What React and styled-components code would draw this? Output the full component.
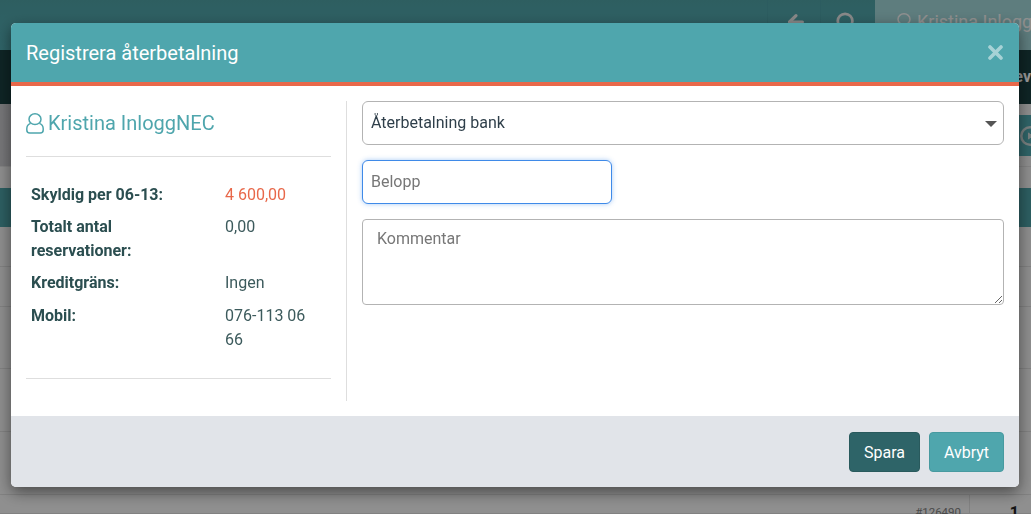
import styled, { createGlobalStyle } from 'styled-components';
import { ArrowLeft, Search } from 'lucide-react';

const Global = createGlobalStyle`
  html, body {
    margin: 0;
    height: 100%;
    overflow: hidden;
    font-family: Roboto, "Liberation Sans", sans-serif;
    font-size: 16px;
    color: #2b4e50;
  }
  * { box-sizing: border-box; }
`;

const Page = styled.div`
  height: 514px;
  overflow: hidden;
  background: #eeeeee;
`;

const TopBar = styled.div`
  height: 50px;
  display: flex;
  justify-content: flex-end;
  background: linear-gradient(#4d9da1, #4fa6ad);
`;

const TopCell = styled.div`
  width: ${props => props.width}px;
  display: flex;
  justify-content: center;
  padding-top: 11px;
  border-left: 1px solid #4a9aa0;
  color: #e4e4e4;
`;

const UserCell = styled.div`
  width: 156px;
  display: flex;
  align-items: flex-start;
  gap: 4px;
  padding: 11px 0 0 20px;
  background: #9dd0d2;
  color: #f0f0f0;
  font-size: 18px;
  line-height: 22px;
  white-space: nowrap;
  overflow: hidden;
`;

const NavBar = styled.div`
  height: 54px;
  display: flex;
  justify-content: flex-end;
  padding: 17px 0 0;
  background: #193e3f;
  color: #ffffff;
  font-weight: 700;
`;

const Toolbar = styled.div`
  height: 63px;
  padding-top: 11px;
  background: linear-gradient(90deg, #c6c6ca, #eeeeee);
  border-bottom: 1px solid #dddddd;
`;

const ToolTeal = styled.div`
  height: 41px;
  margin-left: auto;
  width: 12px;
  background: #4fa6ad;
  display: flex;
  align-items: center;
`;

const Spacer = styled.div`
  height: 21px;
`;

const TableHead = styled.div`
  height: 39px;
  background: #4b9ea3;
`;

const TableRow = styled.div`
  height: ${props => props.height}px;
  display: flex;
  justify-content: flex-end;
  border-bottom: 1px solid #d8d8d8;
  font-size: 11px;
`;

const RefCell = styled.div`
  padding-top: 10px;
  padding-right: 8px;
  font-size: 11.5px;
  color: #7b7b7b;
`;

const CountCell = styled.div`
  width: 62px;
  padding: 8px 12px 0 0;
  border-left: 1px solid #d8d8d8;
  text-align: right;
  font-size: 16px;
  font-weight: 700;
  color: #222222;
`;

const Backdrop = styled.div`
  position: fixed;
  inset: 0;
  background: rgba(0, 0, 0, 0.4);
  padding: 23px 12px 0 11px;
`;

const Modal = styled.div`
  height: 464px;
  display: flex;
  flex-direction: column;
  background: #ffffff;
  border-radius: 5px;
  overflow: hidden;
  box-shadow: 0 5px 15px rgba(0, 0, 0, 0.5);
`;

const Header = styled.div`
  height: 63px;
  flex: none;
  display: flex;
  align-items: center;
  justify-content: space-between;
  padding: 2px 15px 2px;
  background: #4fa6ad;
  border-bottom: 4px solid #e8684a;
  color: #ffffff;
`;

const Title = styled.h4`
  margin: 0;
  font-size: 20px;
  font-weight: 400;
  line-height: 24px;
`;

const Close = styled.span`
  display: flex;
  opacity: 0.5;
  margin-right: 1px;
`;

const Body = styled.div`
  flex: 1;
  display: flex;
  padding: 15px 15px;
`;

const Side = styled.div`
  width: 321px;
  flex: none;
  padding-right: 15px;
  border-right: 1px solid #dedede;
`;

const Name = styled.div`
  height: 56px;
  display: flex;
  align-items: flex-start;
  gap: 4px;
  padding-top: 10px;
  border-bottom: 1px solid #dedede;
  color: #4fa6ad;
  font-size: 20px;
  line-height: 24px;
`;

const Details = styled.div`
  display: grid;
  grid-template-columns: 194px 1fr;
  grid-auto-rows: auto;
  row-gap: 8px;
  padding: 26px 5px 26px;
  border-bottom: 1px solid #dedede;
  line-height: 24px;
`;

const Label = styled.div`
  font-weight: 700;
  padding-right: 60px;
`;

const Value = styled.div`
  color: ${props => (props.$debt ? '#e8684a' : '#3c5a5c')};
  padding-right: 10px;
`;

const MobileLabel = styled(Label)`
  margin-top: 1px;
`;

const MobileValue = styled(Value)`
  margin-top: 1px;
`;

const Form = styled.div`
  flex: 1;
  display: flex;
  flex-direction: column;
  gap: 15px;
  padding-left: 15px;
`;

const SelectWrap = styled.div`
  position: relative;
  height: 44px;
`;

const Select = styled.select`
  width: 100%;
  height: 44px;
  padding: 0 8px 2px;
  appearance: none;
  background: #ffffff;
  border: 1px solid #b3b3b3;
  border-radius: 6px;
  font: inherit;
  color: #2f3f4a;
`;

const Caret = styled.span`
  position: absolute;
  right: 7px;
  top: 20px;
  border-left: 6px solid transparent;
  border-right: 6px solid transparent;
  border-top: 6px solid #555555;
`;

const Input = styled.input`
  width: 250px;
  height: 44px;
  padding: 0 8px 2px;
  background: #ffffff;
  border: 1px solid #3f8ae8;
  border-radius: 6px;
  box-shadow: 0 0 5px rgba(63, 138, 232, 0.45);
  outline: none;
  font: inherit;
  &::placeholder { color: #777777; opacity: 1; }
`;

const Textarea = styled.textarea`
  display: block;
  width: 100%;
  height: 86px;
  padding: 7px 14px;
  border: 1px solid #b3b3b3;
  border-radius: 4px;
  font: inherit;
  line-height: 24px;
  &::placeholder { color: #777777; opacity: 1; }
`;

const Footer = styled.div`
  height: 71px;
  flex: none;
  display: flex;
  justify-content: flex-end;
  gap: 9px;
  padding: 16px 15px 0;
  background: #e1e4e9;
`;

const Button = styled.button`
  height: 40px;
  width: ${props => props.width}px;
  padding: 0;
  border: 1px solid ${props => (props.$primary ? '#295a5d' : '#479aa0')};
  border-radius: 4px;
  background: ${props => (props.$primary ? '#2e6468' : '#4fa6ad')};
  color: #ffffff;
  font: inherit;
`;

function UserIcon({ color = '#4fa6ad' }) {
  return (
    <svg width="18" height="21" viewBox="0 0 18 21" fill="none" stroke={color} strokeWidth="1.5" style={{ marginTop: 2, flex: 'none' }}>
      <ellipse cx="9" cy="6.2" rx="6" ry="5.4" />
      <path d="M4.6 10.4C2.2 11.2 0.8 13.2 0.8 15.8V17C0.8 18.8 2 20 3.8 20H14.2C16 20 17.2 18.8 17.2 17V15.8C17.2 13.2 15.8 11.2 13.4 10.4" />
    </svg>
  );
}

function CloseIcon() {
  return (
    <svg width="15" height="15" viewBox="0 0 15 15" stroke="#ffffff" strokeWidth="3.6" strokeLinecap="round">
      <path d="M2 2L13 13M13 2L2 13" />
    </svg>
  );
}

function PlayBadge() {
  return (
    <svg width="22" height="22" viewBox="0 0 22 22" style={{ flex: 'none' }}>
      <circle cx="11" cy="11" r="10" fill="#c9d6d6" />
      <circle cx="11" cy="11" r="7.5" fill="#4fa6ad" />
      <path d="M8.5 6.5L15.5 11L8.5 15.5Z" fill="#c9d6d6" stroke="#4fa6ad" strokeWidth="1" />
    </svg>
  );
}

function App() {
  return (
    <>
      <Global />
      <Page>
        <TopBar>
          <TopCell width={53}><ArrowLeft size={22} strokeWidth={3.5} style={{ marginLeft: 4 }} /></TopCell>
          <TopCell width={55}><Search size={22} strokeWidth={3} style={{ marginRight: 4 }} /></TopCell>
          <UserCell><UserIcon color="#f0f0f0" />Kristina Inlogg</UserCell>
        </TopBar>
        <NavBar>ev</NavBar>
        <Toolbar>
          <ToolTeal><PlayBadge /></ToolTeal>
        </Toolbar>
        <Spacer />
        <TableHead />
        <TableRow height={40} />
        <TableRow height={40} />
        <TableRow height={62} />
        <TableRow height={63} />
        <TableRow height={63} />
        <TableRow height={19}>
          <RefCell>#126490</RefCell>
          <CountCell>1</CountCell>
        </TableRow>
      </Page>
      <Backdrop>
        <Modal>
          <Header>
            <Title>Registrera återbetalning</Title>
            <Close><CloseIcon /></Close>
          </Header>
          <Body>
            <Side>
              <Name><UserIcon />Kristina InloggNEC</Name>
              <Details>
                <Label>Skyldig per 06-13:</Label>
                <Value $debt>4 600,00</Value>
                <Label>Totalt antal reservationer:</Label>
                <Value>0,00</Value>
                <Label>Kreditgräns:</Label>
                <Value>Ingen</Value>
                <MobileLabel>Mobil:</MobileLabel>
                <MobileValue>076-113 06 66</MobileValue>
              </Details>
            </Side>
            <Form>
              <SelectWrap>
                <Select defaultValue="bank">
                  <option value="bank">Återbetalning bank</option>
                </Select>
                <Caret />
              </SelectWrap>
              <Input placeholder="Belopp" />
              <Textarea placeholder="Kommentar" />
            </Form>
          </Body>
          <Footer>
            <Button $primary width={71}>Spara</Button>
            <Button width={75}>Avbryt</Button>
          </Footer>
        </Modal>
      </Backdrop>
    </>
  );
}

export default App;
